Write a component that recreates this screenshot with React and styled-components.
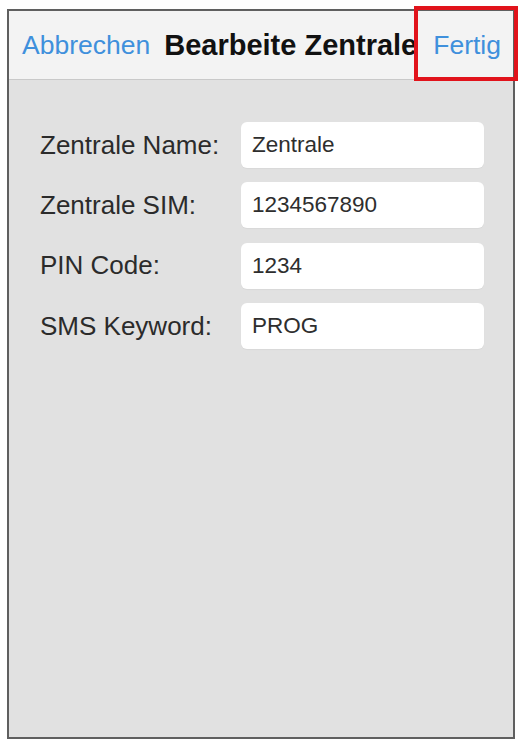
import React from "react";
import styled, { createGlobalStyle } from "styled-components";

const GlobalStyle = createGlobalStyle`
  html, body {
    margin: 0;
    padding: 0;
    background: #ffffff;
  }
  body {
    font-family: "Liberation Sans", Arial, Helvetica, sans-serif;
  }
`;

const Page = styled.div`
  width: 520px;
  height: 740px;
  padding: 9px 0 0 7px;
  box-sizing: border-box;
`;

const Frame = styled.div`
  position: relative;
  width: 508px;
  height: 730px;
  box-sizing: border-box;
  border: 2px solid #5f5f5f;
  background: #e1e1e1;
  display: flex;
  flex-direction: column;
`;

const NavBar = styled.header`
  height: 68px;
  flex: none;
  background: #f3f3f3;
  border-bottom: 1px solid #c9c9c9;
  display: flex;
  align-items: center;
  padding: 0 0 0 13px;
  gap: 14px;
`;

const NavButton = styled.span`
  font-size: 26.5px;
  color: #3f90dc;
  white-space: nowrap;
  flex: none;
`;

const Title = styled.h1`
  margin: 0;
  font-size: 29px;
  font-weight: 700;
  color: #111;
  white-space: nowrap;
  flex: 1;
  min-width: 0;
`;

const DoneButton = styled(NavButton)`
  margin-right: 12px;
`;

/* red highlight drawn over the Done button */
const Highlight = styled.div`
  position: absolute;
  left: 405px;
  top: -5px;
  width: 104px;
  height: 75px;
  box-sizing: border-box;
  border: 4px solid #e1131b;
  background: transparent;
  pointer-events: none;
`;

const Form = styled.div`
  display: grid;
  grid-template-columns: 201px 243px;
  grid-auto-rows: 46px;
  row-gap: 14.4px;
  align-items: center;
  padding: 42px 0 0 31px;
`;

const Label = styled.span`
  font-size: 26px;
  color: #2b2b2b;
  white-space: nowrap;
`;

const Field = styled.div`
  height: 46px;
  background: #ffffff;
  border-radius: 6px;
  display: flex;
  align-items: center;
  padding-left: 11px;
  font-size: 22.5px;
  color: #2e2e2e;
  box-shadow: 0 1px 1px rgba(0, 0, 0, 0.04);
`;

const fields = [
  { label: "Zentrale Name:", value: "Zentrale" },
  { label: "Zentrale SIM:", value: "1234567890" },
  { label: "PIN Code:", value: "1234" },
  { label: "SMS Keyword:", value: "PROG" },
];

export default function App() {
  return (
    <>
      <GlobalStyle />
      <Page>
        <Frame>
          <NavBar>
            <NavButton>Abbrechen</NavButton>
            <Title>Bearbeite Zentrale</Title>
            <DoneButton>Fertig</DoneButton>
          </NavBar>
          <Highlight />
          <Form>
            {fields.map((f) => (
              <React.Fragment key={f.label}>
                <Label>{f.label}</Label>
                <Field>{f.value}</Field>
              </React.Fragment>
            ))}
          </Form>
        </Frame>
      </Page>
    </>
  );
}
